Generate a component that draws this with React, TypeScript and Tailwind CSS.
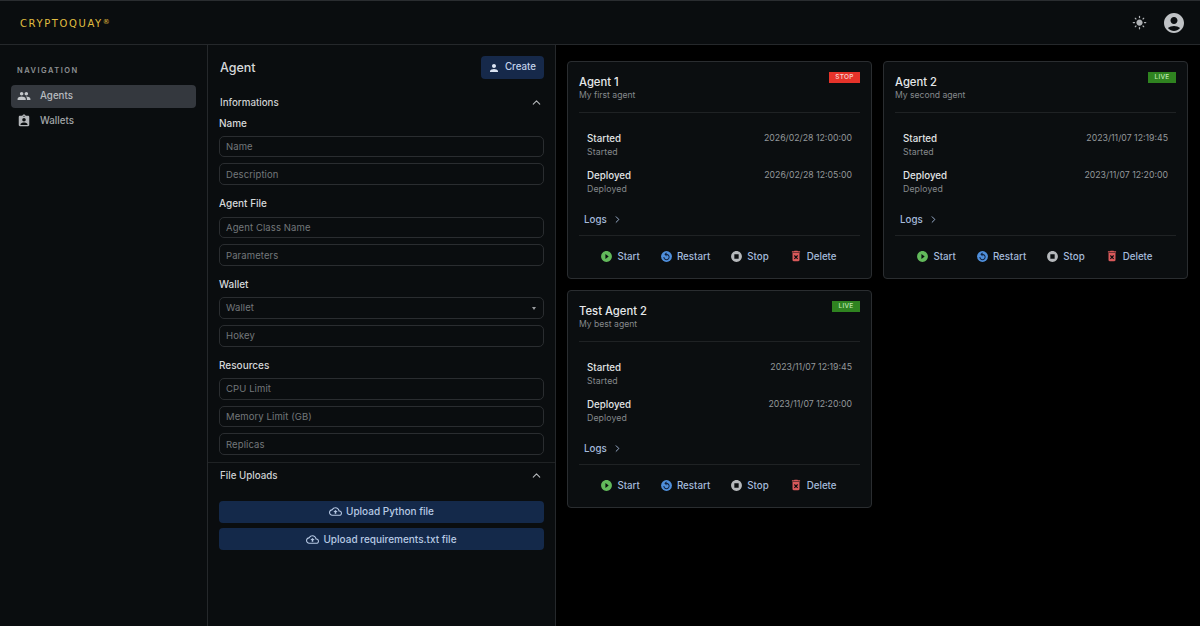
import { ChevronUp, ChevronRight } from 'lucide-react';

const PATHS = {
  people: 'M16 11c1.66 0 2.99-1.34 2.99-3S17.66 5 16 5c-1.66 0-3 1.34-3 3s1.34 3 3 3zm-8 0c1.66 0 2.99-1.34 2.99-3S9.66 5 8 5C6.34 5 5 6.34 5 8s1.34 3 3 3zm0 2c-2.33 0-7 1.17-7 3.5V19h14v-2.5c0-2.33-4.67-3.5-7-3.5zm8 0c-.29 0-.62.02-.97.05 1.16.84 1.97 1.97 1.97 3.45V19h6v-2.5c0-2.33-4.67-3.5-7-3.5z',
  wallet: 'M19 3h-4.18C14.4 1.84 13.3 1 12 1c-1.3 0-2.4.84-2.82 2H5c-1.1 0-2 .9-2 2v14c0 1.1.9 2 2 2h14c1.1 0 2-.9 2-2V5c0-1.1-.9-2-2-2zm-7 0c.55 0 1 .45 1 1s-.45 1-1 1-1-.45-1-1 .45-1 1-1zm0 4c1.66 0 3 1.34 3 3s-1.34 3-3 3-3-1.34-3-3 1.34-3 3-3zm6 12H6v-1.4c0-2 4-3.1 6-3.1s6 1.1 6 3.1V19z',
  account: 'M12 2C6.48 2 2 6.48 2 12s4.48 10 10 10 10-4.48 10-10S17.52 2 12 2zm0 4c1.93 0 3.5 1.57 3.5 3.5S13.93 13 12 13s-3.5-1.57-3.5-3.5S10.07 6 12 6zm0 14c-2.03 0-4.43-.82-6.14-2.88C7.55 15.8 9.68 15 12 15s4.45.8 6.14 2.12C16.43 19.18 14.03 20 12 20z',
  person: 'M12 12c2.21 0 4-1.79 4-4s-1.79-4-4-4-4 1.79-4 4 1.79 4 4 4zm0 2c-2.67 0-8 1.34-8 4v2h16v-2c0-2.66-5.33-4-8-4z',
  sun: 'M12 7c-2.76 0-5 2.24-5 5s2.24 5 5 5 5-2.24 5-5-2.24-5-5-5zM2 13h2c.55 0 1-.45 1-1s-.45-1-1-1H2c-.55 0-1 .45-1 1s.45 1 1 1zm18 0h2c.55 0 1-.45 1-1s-.45-1-1-1h-2c-.55 0-1 .45-1 1s.45 1 1 1zM11 2v2c0 .55.45 1 1 1s1-.45 1-1V2c0-.55-.45-1-1-1s-1 .45-1 1zm0 18v2c0 .55.45 1 1 1s1-.45 1-1v-2c0-.55-.45-1-1-1s-1 .45-1 1zM5.99 4.58c-.39-.39-1.03-.39-1.41 0-.39.39-.39 1.03 0 1.41l1.06 1.06c.39.39 1.03.39 1.41 0s.39-1.03 0-1.41L5.99 4.58zm12.37 12.37c-.39-.39-1.03-.39-1.41 0-.39.39-.39 1.03 0 1.41l1.06 1.06c.39.39 1.03.39 1.41 0 .39-.39.39-1.03 0-1.41l-1.06-1.06zm1.06-10.96c.39-.39.39-1.03 0-1.41-.39-.39-1.03-.39-1.41 0l-1.06 1.06c-.39.39-.39 1.03 0 1.41s1.03.39 1.41 0l1.06-1.06zM7.05 18.36c.39-.39.39-1.03 0-1.41-.39-.39-1.03-.39-1.41 0l-1.06 1.06c-.39.39-.39 1.03 0 1.41s1.03.39 1.41 0l1.06-1.06z',
  upload: 'M19.35 10.04C18.67 6.59 15.64 4 12 4 9.11 4 6.6 5.64 5.35 8.04 2.34 8.36 0 10.91 0 14c0 3.31 2.69 6 6 6h13c2.76 0 5-2.24 5-5 0-2.64-2.05-4.78-4.65-4.96zM19 18H6c-2.21 0-4-1.79-4-4 0-2.05 1.53-3.76 3.56-3.97l1.07-.11.5-.95C8.08 7.14 9.94 6 12 6c2.62 0 4.88 1.86 5.39 4.43l.3 1.5 1.53.11c1.56.1 2.78 1.41 2.78 2.96 0 1.65-1.35 3-3 3zM8 13h2.55v3h2.9v-3H16l-4-4z',
  play: 'M12 2C6.48 2 2 6.48 2 12s4.48 10 10 10 10-4.48 10-10S17.52 2 12 2zm-2 14.5v-9l6 4.5-6 4.5z',
  stop: 'M12 2C6.48 2 2 6.48 2 12s4.48 10 10 10 10-4.48 10-10S17.52 2 12 2zm4 14H8V8h8v8z',
  remove: 'M6 19c0 1.1.9 2 2 2h8c1.1 0 2-.9 2-2V7H6v12zm2.46-7.12 1.41-1.41L12 12.59l2.12-2.12 1.41 1.41L13.41 14l2.12 2.12-1.41 1.41L12 15.41l-2.12 2.12-1.41-1.41L10.59 14l-2.13-2.12zM15.5 4l-1-1h-5l-1 1H5v2h14V4z',
};

function Icon({ d, className }: { d: string; className?: string }) {
  return (
    <svg viewBox="0 0 24 24" fill="currentColor" className={className}>
      <path d={d} />
    </svg>
  );
}

function RestartIcon({ className }: { className?: string }) {
  return (
    <svg viewBox="0 0 24 24" className={className}>
      <circle cx="12" cy="12" r="10" fill="#4f8fdc" />
      <path
        fill="#12233f"
        d="M12 7V4L8 8l4 4V9c2.2 0 4 1.8 4 4s-1.8 4-4 4-4-1.8-4-4H6.2c0 3.2 2.6 5.8 5.8 5.8s5.8-2.6 5.8-5.8-2.6-6-5.8-6z"
      />
    </svg>
  );
}

const field =
  'h-[21.7px] w-full rounded-[5px] border border-[#2a2d30] bg-transparent px-[6px] text-[9.5px] tracking-[0.1px] text-[#d0d2d4] placeholder:text-[#73777a] outline-none';

function Field({ placeholder }: { placeholder: string }) {
  return <input className={field} placeholder={placeholder} readOnly />;
}

function Label({ children, className }: { children: string; className?: string }) {
  return <div className={`text-[10px] leading-[13px] font-medium text-[#d6d8da] ${className ?? ''}`}>{children}</div>;
}

function InfoRow({ title, date }: { title: string; date: string }) {
  return (
    <div className="flex justify-between px-[8px]">
      <div>
        <div className="text-[9.75px] leading-[13px] font-medium text-[#e2e4e6]">{title}</div>
        <div className="mt-[2px] text-[8.75px] leading-[11px] tracking-[0.1px] text-[#85898c]">{title}</div>
      </div>
      <div className="text-[8.75px] leading-[13px] text-[#94989b]">{date}</div>
    </div>
  );
}

function AgentCard({ name, desc, live, started, deployed }: { name: string; desc: string; live: boolean; started: string; deployed: string }) {
  return (
    <div className="flex h-[218px] w-[305px] flex-col rounded-[4px] border border-[#2a2d30] bg-[#0b0e10] px-[11px]">
      <div className="flex justify-between pt-[10px]">
        <div className="pt-[2.5px]">
          <div className="text-[11.25px] leading-[15px] font-medium text-[#e6e8ea]">{name}</div>
          <div className="text-[8.6px] leading-[11px] text-[#85898c]">{desc}</div>
        </div>
        <div
          className={
            live
              ? 'flex h-[11px] w-[28px] items-center justify-center bg-[#2f8320] text-[6.5px] font-medium tracking-[0.3px] text-[#bfe6b3]'
              : 'flex h-[11px] w-[31px] items-center justify-center bg-[#e6332a] text-[6.5px] font-medium tracking-[0.3px] text-[#f9d5d2]'
          }
        >
          {live ? 'LIVE' : 'STOP'}
        </div>
      </div>
      <div className="mt-[11.5px] h-px bg-[#1f2224]" />
      <div className="mt-[19px] flex flex-col gap-[11px]">
        <InfoRow title="Started" date={started} />
        <InfoRow title="Deployed" date={deployed} />
      </div>
      <div className="mt-[18px] flex items-center gap-[5px] px-[5px] text-[9.75px] leading-[13px] font-medium text-[#a5bbdc]">
        Logs <ChevronRight className="size-[11px]" strokeWidth={2} />
      </div>
      <div className="mt-[9px] h-px bg-[#1f2224]" />
      <div className="mt-[13px] flex items-center justify-center gap-[20px] pr-[2px] text-[9.75px] leading-[13px] font-medium text-[#a5bbdc]">
        <span className="flex items-center gap-[4px]"><Icon d={PATHS.play} className="size-[13px] text-[#62b95b]" />Start</span>
        <span className="flex items-center gap-[4px]"><RestartIcon className="size-[13px]" />Restart</span>
        <span className="flex items-center gap-[4px]"><Icon d={PATHS.stop} className="size-[13px] text-[#b5b8bb]" />Stop</span>
        <span className="flex items-center gap-[4px]"><Icon d={PATHS.remove} className="size-[14px] text-[#d9595a]" />Delete</span>
      </div>
    </div>
  );
}

export default function App() {
  return (
    <div className="flex h-[626px] w-[1200px] flex-col overflow-hidden bg-black font-['Inter',sans-serif]">
      <header className="flex h-[45px] shrink-0 items-center justify-between border-y border-t-[#2a2d30] border-b-[#25282b] bg-[#0a0d0f] pr-[14px] pl-[20px]">
        <div className="flex items-start pt-[3px] font-['DejaVu_Sans',sans-serif] text-[#e0bd40]">
          <span className="text-[10px] leading-[10px] font-normal tracking-[1.6px]">CRYPTOQUAY</span>
          <span className="text-[7px] leading-[7px]">®</span>
        </div>
        <div className="flex items-center gap-[15px]">
          <Icon d={PATHS.sun} className="size-[15px] text-[#b0b3b6]" />
          <Icon d={PATHS.account} className="size-[24px] text-[#bfc2c5]" />
        </div>
      </header>
      <div className="flex min-h-0 flex-1">
        <aside className="w-[208px] shrink-0 border-r border-[#25282b] bg-[#0a0d0f] px-[11px] pt-[21px]">
          <div className="pl-[6px] text-[7.5px] leading-[10px] font-semibold tracking-[1.5px] text-[#8e9194]">NAVIGATION</div>
          <div className="mt-[8.5px] flex h-[23px] items-center gap-[9px] rounded-[4px] bg-[#34383e] px-[6px] text-[9.75px] font-medium text-[#b8bcc0]">
            <Icon d={PATHS.people} className="size-[14px] text-[#c4c7ca]" />Agents
          </div>
          <div className="mt-[2px] flex h-[23px] items-center gap-[9px] px-[6px] text-[9.75px] font-medium text-[#a2a6a9]">
            <Icon d={PATHS.wallet} className="size-[14px] text-[#b4b7ba]" />Wallets
          </div>
        </aside>
        <section className="w-[348px] shrink-0 border-r border-[#25282b] bg-[#0a0d0f] pt-[10px]">
          <div className="flex h-[24px] items-center justify-between pr-[11px] pl-[12px]">
            <div className="pt-[2px] text-[12.5px] font-medium text-[#d6d8da]">Agent</div>
            <div className="flex h-[23px] w-[63px] items-center justify-center gap-[5px] rounded-[4px] bg-[#16294a] pt-px pr-[1px] text-[9.75px] font-medium text-[#c2d2ea]">
              <Icon d={PATHS.person} className="size-[12px] text-[#dbe4f2]" />Create
            </div>
          </div>
          <div className="mt-[17px] flex items-center justify-between pr-[12px] pl-[12px]">
            <div className="text-[9.75px] leading-[13px] font-medium text-[#cfd1d3]">Informations</div>
            <ChevronUp className="size-[13px] text-[#b5b8bb]" />
          </div>
          <div className="px-[11px]">
            <Label className="mt-[8px]">Name</Label>
            <div className="mt-[5.8px] flex flex-col gap-[6px]">
              <Field placeholder="Name" />
              <Field placeholder="Description" />
            </div>
            <Label className="mt-[11.9px]">Agent File</Label>
            <div className="mt-[6.5px] flex flex-col gap-[6px]">
              <Field placeholder="Agent Class Name" />
              <Field placeholder="Parameters" />
            </div>
            <Label className="mt-[11.9px]">Wallet</Label>
            <div className="mt-[6.5px] flex flex-col gap-[6px]">
              <div className="flex h-[21.7px] items-center justify-between rounded-[5px] border border-[#2a2d30] px-[6px] text-[9.5px] tracking-[0.1px] text-[#73777a]">
                Wallet
                <div className="mr-[1px] h-0 w-0 border-x-[2.5px] border-t-[3px] border-x-transparent border-t-[#9a9da0]" />
              </div>
              <Field placeholder="Hokey" />
            </div>
            <Label className="mt-[11.9px]">Resources</Label>
            <div className="mt-[6.5px] flex flex-col gap-[6px]">
              <Field placeholder="CPU Limit" />
              <Field placeholder="Memory Limit (GB)" />
              <Field placeholder="Replicas" />
            </div>
          </div>
          <div className="mt-[7px] h-px bg-[#1f2224]" />
          <div className="mt-[6px] flex items-center justify-between pr-[12px] pl-[12px]">
            <div className="text-[9.75px] leading-[13px] font-medium text-[#cfd1d3]">File Uploads</div>
            <ChevronUp className="size-[13px] text-[#b5b8bb]" />
          </div>
          <div className="mt-[18.5px] flex flex-col gap-[5.7px] px-[11px]">
            <div className="flex h-[22px] items-center justify-center gap-[4px] rounded-[4px] bg-[#14294a] text-[10px] font-medium text-[#b7c9e4]">
              <Icon d={PATHS.upload} className="size-[13px]" />Upload Python file
            </div>
            <div className="flex h-[22px] items-center justify-center gap-[4px] rounded-[4px] bg-[#14294a] text-[10px] font-medium text-[#b7c9e4]">
              <Icon d={PATHS.upload} className="size-[13px]" />Upload requirements.txt file
            </div>
          </div>
        </section>
        <main className="flex min-w-0 flex-1 items-start gap-[11px] pt-[16px] pl-[11px]">
          <div className="flex flex-col gap-[11px]">
            <AgentCard name="Agent 1" desc="My first agent" live={false} started="2026/02/28 12:00:00" deployed="2026/02/28 12:05:00" />
            <AgentCard name="Test Agent 2" desc="My best agent" live started="2023/11/07 12:19:45" deployed="2023/11/07 12:20:00" />
          </div>
          <AgentCard name="Agent 2" desc="My second agent" live started="2023/11/07 12:19:45" deployed="2023/11/07 12:20:00" />
        </main>
      </div>
    </div>
  );
}
